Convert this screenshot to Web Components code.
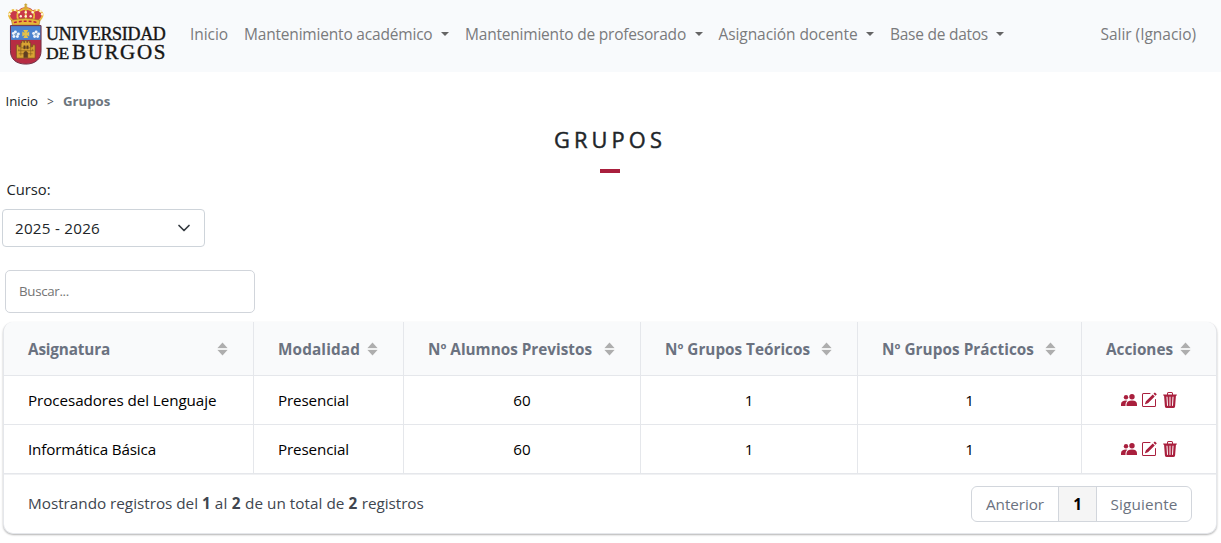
<!DOCTYPE html>
<html lang="es">
<head>
<meta charset="utf-8">
<title>Grupos</title>
<style>
html,body{margin:0;background:#fff}
body{font:15.5px/24px "Open Sans","Noto Sans",sans-serif;color:#212529;height:543px;overflow:hidden}
</style>
</head>
<body>
<ubu-app></ubu-app>
<script>
const define=(name,html,after)=>customElements.define(name,class extends HTMLElement{
  constructor(){super();this.attachShadow({mode:'open'});}
  connectedCallback(){
    const t=document.createElement('template');
    t.innerHTML=typeof html==='function'?html(this):html;
    this.shadowRoot.replaceChildren(t.content.cloneNode(true));
    if(after)after(this);
  }
});

/* Label tracked so that it fills the width given in "w". */
define('fit-text',`<style>:host{display:inline-block;white-space:nowrap}span{display:inline-block}</style><span><slot></slot></span>`,el=>{
  const w=parseFloat(el.getAttribute('w')),s=el.shadowRoot.querySelector('span');
  const n=el.textContent.length;
  s.style.letterSpacing=((w-s.getBoundingClientRect().width)/n)+'px';
  el.style.width=w+'px';
});

define('ubu-logo',`<style>
:host{display:flex;width:160px;height:64px;color:#161616}
.name{font-family:"Liberation Serif",serif;padding-top:23px;margin-left:1.5px;-webkit-text-stroke:.4px #161616}
fit-text{display:block}
.a{font-size:18px;line-height:19px}
.b{display:flex;line-height:17px;gap:3px;align-items:baseline}
.de{font-size:17.5px}.bu{font-size:21px}
</style>
<svg width="38" height="64" viewBox="0 -1 38 64">
 <path d="M5 18Q0 12 4 8Q8 5 12 7Q14 4 19 4Q24 4 26 7Q30 5 34 8Q38 12 33 18Z" fill="#c9384a"/>
 <g fill="none" stroke="#e9b93b" stroke-width="1.8"><path d="M6 18Q-1 12 4 8Q8 5 12 9M12 18Q8 10 14 7Q17 5 19 6M26 18Q30 10 24 7Q21 5 19 6M32 18Q39 12 34 8Q30 5 26 9M19 6V17"/></g>
 <g fill="#fff4d2"><circle cx="4" cy="8" r="1.2"/><circle cx="2.5" cy="11" r="1.2"/><circle cx="8" cy="6.5" r="1.2"/><circle cx="12" cy="9" r="1.2"/><circle cx="14" cy="13" r="1.2"/><circle cx="19" cy="9" r="1.2"/><circle cx="19" cy="13" r="1.2"/><circle cx="24" cy="13" r="1.2"/><circle cx="26" cy="9" r="1.2"/><circle cx="30" cy="6.5" r="1.2"/><circle cx="34" cy="8" r="1.2"/><circle cx="35.5" cy="11" r="1.2"/></g>
 <circle cx="19" cy="4.5" r="2" fill="#d9ab36"/><path d="M19 0V4M17.5 1.5H20.5" stroke="#caa22f" stroke-width="1.2"/>
 <path d="M4.5 17Q19 13.5 33.5 17L32.5 22H5.5Z" fill="#e7b63b" stroke="#9b7221" stroke-width=".6"/>
 <path d="M7 19.5Q19 16.5 31 19.5" stroke="#bd2235" stroke-width="1.5" stroke-dasharray="3 2" fill="none"/>
 <path d="M3.5 22.500H34.500V48C34.500 57 28 61.500 19 61.500S3.500 57 3.500 48Z" fill="#b72c43"/>
 <path d="M3.500 22.500H34.500V37H3.500Z" fill="#4b83d0"/>
 <path d="M3.500 22.500H34.500V48C34.500 57 28 61.500 19 61.500S3.500 57 3.500 48Z" fill="none" stroke="#703044"/>
 <g fill="#eef3fa"><circle cx="8.500" cy="29" r="1.500"/><circle cx="11.500" cy="31" r="1.500"/><circle cx="10.500" cy="33.500" r="1.500"/><circle cx="7" cy="33.500" r="1.500"/><circle cx="6.500" cy="30.500" r="1.500"/><circle cx="29.500" cy="29" r="1.500"/><circle cx="32" cy="31" r="1.500"/><circle cx="31" cy="33.500" r="1.500"/><circle cx="28" cy="33.500" r="1.500"/><circle cx="27" cy="30.500" r="1.500"/></g>
 <circle cx="9" cy="31.500" r="1" fill="#8ba6b5"/><circle cx="29.500" cy="31.500" r="1" fill="#8ba6b5"/>
 <path d="M16.500 27H21.500L20 30 22.500 28.500V33.500L20 32 21.500 35H16.500L18 32 15.500 33.500V28.500L18 30Z" fill="#e3c14a"/>
 <path d="M9.500 55.500V42H12V44H14V40H15V38H17V39.500H18V37.500H20V39.500H21V38H23V40H24V44H26V42H28.500V55.500Z" fill="#d9a333" stroke="#704d20" stroke-width=".7"/>
 <path d="M11 48H27M14 45H24M12 51H26M14 41V53M24 41V53" stroke="#87601f" stroke-width=".7"/>
 <path d="M17 55V50Q19 47 21 50V55M17 43H18.500V46H17ZM20 43H21.500V46H20ZM12 46V48M26 46V48" fill="#5f3e22" stroke="#5f3e22" stroke-width=".5"/>
</svg>
<div class="name"><fit-text class="a" w="119.5">UNIVERSIDAD</fit-text><div class="b"><fit-text class="de" w="23">DE</fit-text><fit-text class="bu" w="95">BURGOS</fit-text></div></div>`);

define('nav-item',el=>`<style>:host{display:flex;align-items:center;justify-content:space-between;color:#7a7b7c}i{border:4px solid transparent;border-top-color:#656565;border-bottom:0;width:0}</style><slot></slot>${el.hasAttribute('menu')?'<i></i>':''}`);

define('nav-bar',`<style>
:host{display:flex;height:72px;box-sizing:border-box;background:#f8fafc;padding:2px 25px 0 7px;align-items:flex-start}
nav{display:flex;gap:16px;margin:20px 0 0 23px}
.out{margin:20px 0 0 auto}
</style><ubu-logo></ubu-logo><nav>
<nav-item style="width:38px"><fit-text w="38">Inicio</fit-text></nav-item>
<nav-item menu style="width:205px"><fit-text w="188.5">Mantenimiento académico</fit-text></nav-item>
<nav-item menu style="width:237.5px"><fit-text w="221">Mantenimiento de profesorado</fit-text></nav-item>
<nav-item menu style="width:155.5px"><fit-text w="139">Asignación docente</fit-text></nav-item>
<nav-item menu style="width:114px"><fit-text w="98">Base de datos</fit-text></nav-item>
</nav><nav-item class="out"><fit-text w="95.5">Salir (Ignacio)</fit-text></nav-item>`);

define('bread-crumb',`<style>:host{display:flex;padding:19px 0 0 5.5px;height:20px;line-height:20px;font-size:13.2px;align-items:center}
.gt{margin:1px 9px 0 9px;font-size:12px;color:#495057}b{color:#6c757d}</style>
<fit-text w="32.5">Inicio</fit-text><span class="gt">&gt;</span><b><fit-text w="47.5">Grupos</fit-text></b>`);

define('page-title',`<style>:host{display:flex;flex-direction:column;align-items:center;height:62px;padding:14px 2px 0 0;box-sizing:border-box;font-size:21.8px;line-height:30px;color:#212529}
div{-webkit-text-stroke:.45px #212529;padding-left:1px}
i{width:20px;height:4px;margin-top:14px;background:#a91f3d}</style><div><fit-text w="112">GRUPOS</fit-text></div><i></i>`);

define('course-select',`<style>:host{display:block;padding:8px 0 0 2px}
label{display:block;margin-left:4.5px;height:24px;line-height:24px;font-size:14.8px;margin-top:-4px}
.box{box-sizing:border-box;width:203px;height:38px;margin-top:8px;border:1px solid #ced4da;border-radius:4px;padding:0 12px;display:flex;align-items:center;justify-content:space-between;line-height:24px;font-size:15.2px}
svg{display:block}</style>
<label><fit-text w="44">Curso:</fit-text></label><div class="box"><fit-text w="85">2025 - 2026</fit-text><svg width="16" height="16" viewBox="0 0 16 16"><path d="m3 5.5 5 5 5-5" fill="none" stroke="#343a40" stroke-width="1.7" stroke-linecap="round" stroke-linejoin="round"/></svg></div>`);

define('search-box',`<style>:host{display:flex;align-items:center;box-sizing:border-box;width:250px;height:43px;margin:23px 0 0 5px;border:1px solid #d1d5db;border-radius:5px;padding:0 0 2px 13px;color:#757575;font-size:13.3px}</style><fit-text w="50">Buscar...</fit-text>`);

define('sort-icon',`<style>:host{display:block;width:11px;height:14px}svg{display:block}</style><svg width="11" height="14" viewBox="0 0 11 14"><path d="M5.5 .5 10.500 6H.5ZM.5 8H10.500L5.500 13.500Z" fill="#aeaeae"/><path d="M.5 6.500H10.500V7.500H.5Z" fill="#e8e8e8"/></svg>`);

define('head-cell',`<style>:host{display:flex;align-items:center;justify-content:space-between;box-sizing:border-box;height:54px;background:#f9fafb;color:#6b7280;font-weight:700;border-bottom:1px solid #e5e7eb;border-right:1px solid #e5e7eb;padding:0 25px 0 24px;font-size:15.3px}:host([last]){border-right:0}</style><slot></slot><sort-icon></sort-icon>`);

define('body-cell',`<style>:host{display:flex;align-items:center;box-sizing:border-box;height:49px;border-bottom:1px solid #e5e7eb;border-right:1px solid #e5e7eb;padding:0 24px 1px;color:#000;font-size:15.2px}:host([center]){justify-content:center}:host([last]){border-right:0}</style><slot></slot>`);

define('row-actions',`<style>:host{display:flex;gap:4.5px;align-items:center;color:#a91f3d}svg{display:block;fill:currentColor}</style>
<svg width="16" height="16" viewBox="0 0 16 16"><circle cx="5" cy="5.2" r="2.2"/><circle cx="11" cy="4.7" r="2.7"/><path d="M0 14V12.300C0 9.900 2 8.600 5 8.600Q5.700 8.600 6.300 8.800C4.800 9.900 4.500 11.500 4.500 14Z"/><path d="M5.500 14V12.500C5.500 10 7.500 8.500 11 8.500S16 10 16 12.500V14Z"/></svg>
<svg width="16" height="16" viewBox="0 0 16 16"><path d="M15.502 1.940a.5.5 0 0 1 0 .706L14.459 3.690l-2-2L13.502.646a.5.5 0 0 1 .707 0l1.293 1.293zm-1.750 2.456-2-2L4.939 9.210a.5.5 0 0 0-.121.196l-.805 2.414a.25.25 0 0 0 .316.316l2.414-.805a.5.5 0 0 0 .196-.12z"/><path fill-rule="evenodd" d="M1 13.500A1.500 1.500 0 0 0 2.500 15h11a1.500 1.500 0 0 0 1.500-1.500v-6a.5.5 0 0 0-1 0v6a.5.5 0 0 1-.5.5h-11a.5.5 0 0 1-.5-.5v-11a.5.5 0 0 1 .5-.5H9a.5.5 0 0 0 0-1H2.500A1.500 1.500 0 0 0 1 2.500z"/></svg>
<svg width="16" height="16" viewBox="0 0 16 16"><path d="M6.500 1h3a.5.5 0 0 1 .5.5v1H6v-1a.5.5 0 0 1 .5-.5M11 2.500v-1A1.500 1.500 0 0 0 9.500 0h-3A1.500 1.500 0 0 0 5 1.500v1H1.500a.5.5 0 0 0 0 1h.538l.853 10.660A2 2 0 0 0 4.885 16h6.230a2 2 0 0 0 1.994-1.840l.853-10.660h.538a.5.5 0 0 0 0-1zM4.500 5.029a.5.5 0 1 1 .998-.06l.5 8.500a.5.5 0 1 1-.998.060zm6.530-.528a.5.5 0 0 1 .47.528l-.5 8.500a.5.5 0 0 1-.998-.058l.5-8.500a.5.5 0 0 1 .528-.470M8 4.500a.5.5 0 0 1 .5.500v8.500a.5.5 0 0 1-1 0V5a.5.5 0 0 1 .5-.500"/></svg>`);

define('page-links',`<style>:host{display:flex;box-sizing:border-box;height:36px;border:1px solid #d2d6dc;border-radius:6px;overflow:hidden;color:#6b7280;line-height:34px;font-size:15.3px}
span{box-sizing:border-box;display:flex;justify-content:center;border-right:1px solid #d2d6dc}span:last-child{border:0}.p{width:87px}.c{width:38px;background:#f5f5f5;color:#000;font-weight:700}.n{width:94px}</style>
<span class="p"><fit-text w="58">Anterior</fit-text></span><span class="c">1</span><span class="n"><fit-text w="67">Siguiente</fit-text></span>`);

define('groups-table',()=>{
 const rows=[['Procesadores del Lenguaje',188.5],['Informática Básica',128]];
 return `<style>
:host{display:block;margin:9px 4px 0 3px}
.card{box-sizing:border-box;border:1px solid #e5e7eb;border-top:0;border-radius:10px;box-shadow:0 1px 2px rgba(0,0,0,.3);overflow:hidden;background:#fff;height:212px}
.grid{display:grid;grid-template-columns:250px 150px 237px 217px 224px 1fr}
footer{display:flex;align-items:center;justify-content:space-between;padding:0 24px;height:58px;border-top:1px solid #f0f1f3;color:#40464f;font-size:15.3px}
.info{display:flex;white-space:pre;padding-bottom:2px}</style>
<div class="card"><div class="grid">
<head-cell><fit-text w="82">Asignatura</fit-text></head-cell>
<head-cell><fit-text w="82">Modalidad</fit-text></head-cell>
<head-cell><fit-text w="164">Nº Alumnos Previstos</fit-text></head-cell>
<head-cell><fit-text w="145">Nº Grupos Teóricos</fit-text></head-cell>
<head-cell><fit-text w="152">Nº Grupos Prácticos</fit-text></head-cell>
<head-cell last><fit-text w="67">Acciones</fit-text></head-cell>
${rows.map(r=>`<body-cell><fit-text w="${r[1]}">${r[0]}</fit-text></body-cell><body-cell><fit-text w="71">Presencial</fit-text></body-cell><body-cell center>60</body-cell><body-cell center>1</body-cell><body-cell center>1</body-cell><body-cell center last><row-actions></row-actions></body-cell>`).join('')}
</div><footer><div class="info"><fit-text w="170">Mostrando registros del</fit-text><span style="width:4px"></span><b>1</b><span style="width:4px"></span><fit-text w="13">al</fit-text><span style="width:4px"></span><b>2</b><span style="width:4.5px"></span><fit-text w="99.5">de un total de</fit-text><span style="width:4px"></span><b>2</b><span style="width:4.5px"></span><fit-text w="62">registros</fit-text></div><page-links></page-links></footer></div>`});

define('ubu-app',`<style>:host{display:block}</style><nav-bar></nav-bar><bread-crumb></bread-crumb><page-title></page-title><course-select></course-select><search-box></search-box><groups-table></groups-table>`);
</script>
</body>
</html>
